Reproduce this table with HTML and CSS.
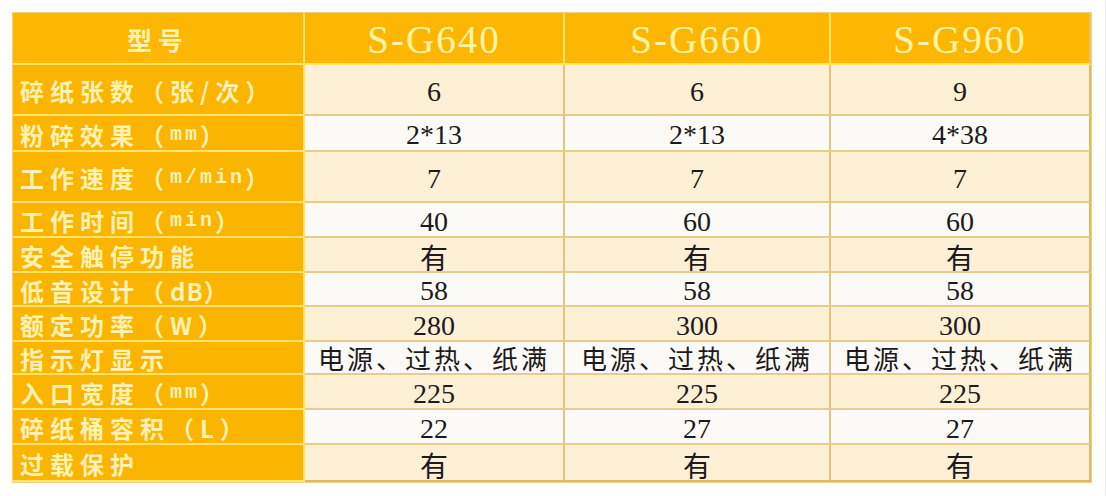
FILE: index.html
```html
<!DOCTYPE html>
<html lang="zh">
<head>
<meta charset="utf-8">
<link rel="stylesheet" href="styles.css">
</head>
<body>
<div class="frame">
  <div class="spec">
    <div class="cell head label-head">型号</div>
    <div class="cell head model">S-G640</div>
    <div class="cell head model">S-G660</div>
    <div class="cell head model last">S-G960</div>

    <div class="cell label r-tall">碎纸张数（张/次）</div>
    <div class="cell data odd">6</div>
    <div class="cell data odd">6</div>
    <div class="cell data odd last">9</div>

    <div class="cell label">粉碎效果（<span class="small">mm</span>）</div>
    <div class="cell data even">2*13</div>
    <div class="cell data even">2*13</div>
    <div class="cell data even last">4*38</div>

    <div class="cell label">工作速度（<span class="small">m/min</span>）</div>
    <div class="cell data odd">7</div>
    <div class="cell data odd">7</div>
    <div class="cell data odd last">7</div>

    <div class="cell label">工作时间（<span class="small">min</span>）</div>
    <div class="cell data even">40</div>
    <div class="cell data even">60</div>
    <div class="cell data even last">60</div>

    <div class="cell label">安全触停功能</div>
    <div class="cell data odd">有</div>
    <div class="cell data odd">有</div>
    <div class="cell data odd last">有</div>

    <div class="cell label">低音设计（<span class="unit">dB</span>）</div>
    <div class="cell data even">58</div>
    <div class="cell data even">58</div>
    <div class="cell data even last">58</div>

    <div class="cell label">额定功率（W）</div>
    <div class="cell data odd">280</div>
    <div class="cell data odd">300</div>
    <div class="cell data odd last">300</div>

    <div class="cell label">指示灯显示</div>
    <div class="cell data even cjk">电源、过热、纸满</div>
    <div class="cell data even cjk">电源、过热、纸满</div>
    <div class="cell data even cjk last">电源、过热、纸满</div>

    <div class="cell label">入口宽度（<span class="small">mm</span>）</div>
    <div class="cell data odd">225</div>
    <div class="cell data odd">225</div>
    <div class="cell data odd last">225</div>

    <div class="cell label">碎纸桶容积（L）</div>
    <div class="cell data even">22</div>
    <div class="cell data even">27</div>
    <div class="cell data even last">27</div>

    <div class="cell label bottom">过载保护</div>
    <div class="cell data odd bottom">有</div>
    <div class="cell data odd bottom">有</div>
    <div class="cell data odd bottom last">有</div>
  </div>
</div>
</body>
</html>
```

FILE: styles.css
```css
html, body {
  margin: 0;
  padding: 0;
  background: #ffffff;
}

.frame {
  width: 1106px;
  height: 496px;
  box-sizing: border-box;
  padding: 13px 0 0 13px;
  border-right: 1px solid #ececec;
}

.spec {
  display: grid;
  grid-template-columns: 292px 260px 266px 260px;
  grid-template-rows: 52px 51px 36px 51px 35px 35px 34px 35px 33px 35px 35px 37px;
  width: 1078px;
  box-shadow: 0 0 0 1px #f1d27a;
}

.cell {
  box-sizing: border-box;
  display: flex;
  align-items: center;
  justify-content: center;
  border-right: 2px solid #e4c47e;
  border-bottom: 2px solid #e9cc8c;
  overflow: visible;
  white-space: nowrap;
}

.head {
  background: #fdb702;
  border-right: 2px solid #ffe46a;
  border-bottom: 2px solid #ffe46a;
}

.label-head {
  font-family: "Noto Sans CJK SC", sans-serif;
  font-size: 25px;
  font-weight: 700;
  color: #fff2b4;
  letter-spacing: 6px;
  padding-top: 2px;
}

.model {
  font-family: "Liberation Serif", serif;
  font-size: 39px;
  color: #fff4a6;
  letter-spacing: 2px;
  padding-top: 2px;
}

.head.last {
  border-right: 2px solid #e6c270;
}

.label {
  background: #fbb400;
  border-right: 2px solid #ffe46a;
  border-bottom: 2px solid #ffe46a;
  justify-content: flex-start;
  padding-left: 7px;
  padding-top: 2px;
  font-family: "Noto Sans CJK SC", sans-serif;
  font-size: 24px;
  font-weight: 700;
  color: #fff2b4;
  letter-spacing: 6px;
}

.label .small {
  font-family: "Liberation Mono", monospace;
  font-size: 20px;
  font-weight: 700;
  letter-spacing: 3px;
}

.label .unit {
  letter-spacing: 1px;
}

.data {
  font-family: "Liberation Serif", "Noto Sans CJK SC", serif;
  font-size: 28px;
  color: #1c1a1c;
  padding-top: 4px;
}

.data.cjk {
  font-family: "Noto Sans CJK SC", sans-serif;
  font-size: 26px;
  letter-spacing: 3px;
  padding-top: 0;
}

.odd {
  background: #fef0d5;
}

.even {
  background: #fcfaf6;
}

.data.last {
  border-right: 2px solid #dcb964;
}

.bottom.data {
  border-bottom: 2px solid #dcb964;
}
```
